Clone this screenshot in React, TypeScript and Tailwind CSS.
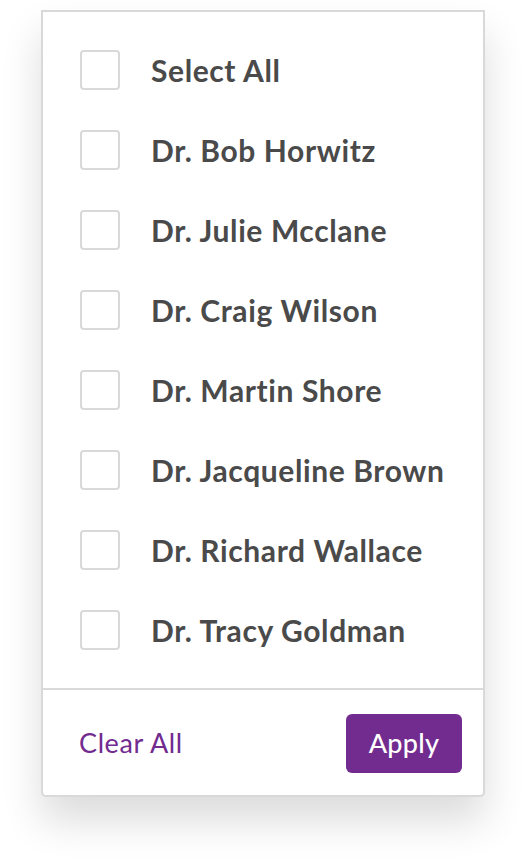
const doctors = [
  "Select All",
  "Dr. Bob Horwitz",
  "Dr. Julie Mcclane",
  "Dr. Craig Wilson",
  "Dr. Martin Shore",
  "Dr. Jacqueline Brown",
  "Dr. Richard Wallace",
  "Dr. Tracy Goldman",
];

export default function App() {
  return (
    <div className="min-h-screen bg-white pt-[10px] pl-[41px] font-['Lato',sans-serif]">
      <div className="w-[444px] rounded-b-[5px] border-2 border-[#d9d9d9] bg-white shadow-[0_24px_40px_rgba(0,0,0,0.14)]">
        <ul className="py-[18px]">
          {doctors.map((name) => (
            <li key={name} className="flex h-20 items-center pl-[37px]">
              <span className="h-10 w-10 shrink-0 rounded-[4px] border-2 border-[#d9d9d9] bg-white" />
              <span className="ml-[31px] text-[30px] font-bold tracking-[0.6px] text-[#4a4a4a]">
                {name}
              </span>
            </li>
          ))}
        </ul>
        <div className="flex items-center justify-between border-t-2 border-[#d9d9d9] pt-[24px] pr-[21px] pb-[22px] pl-[36px]">
          <button className="text-[27px] tracking-[0.6px] text-[#722b8f]">Clear All</button>
          <button className="h-[59px] w-[116px] rounded-[6px] bg-[#722b8f] text-[27px] font-medium tracking-[0.3px] text-white">
            Apply
          </button>
        </div>
      </div>
    </div>
  );
}
